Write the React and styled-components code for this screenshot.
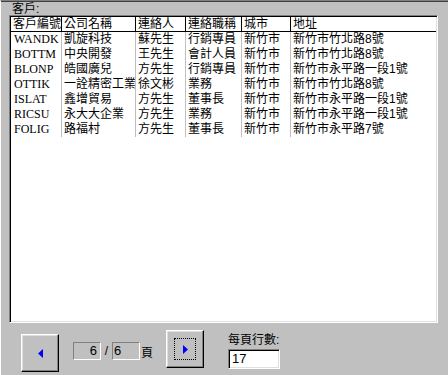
import React from "react";
import styled, { createGlobalStyle } from "styled-components";

const customers = [
  ["WANDK", "凱旋科技", "蘇先生", "行銷專員", "新竹市", "新竹市竹北路8號"],
  ["BOTTM", "中央開發", "王先生", "會計人員", "新竹市", "新竹市竹北路8號"],
  ["BLONP", "皓國廣兒", "方先生", "行銷專員", "新竹市", "新竹市永平路一段1號"],
  ["OTTIK", "一詮精密工業", "徐文彬", "業務", "新竹市", "新竹市竹北路8號"],
  ["ISLAT", "鑫增貿易", "方先生", "董事長", "新竹市", "新竹市永平路一段1號"],
  ["RICSU", "永大大企業", "方先生", "業務", "新竹市", "新竹市永平路一段1號"],
  ["FOLIG", "路福村", "方先生", "董事長", "新竹市", "新竹市永平路7號"],
];

const headers = ["客戶編號", "公司名稱", "連絡人", "連絡職稱", "城市", "地址"];

function Arrow({ dir }) {
  return (
    <svg width="5" height="9" viewBox="0 0 5 9">
      {dir === "left" ? (
        <polygon points="5,0 5,9 0,4.5" fill="#0000ff" />
      ) : (
        <polygon points="0,0 0,9 5,4.5" fill="#0000ff" />
      )}
    </svg>
  );
}

export default function App() {
  return (
    <>
      <GlobalStyle />
      <Frame>
        <Label>客戶:</Label>
        <Grid>
          <Table>
            {headers.map((h, i) => (
              <HeadCell key={h} $first={i === 0}>
                {h}
              </HeadCell>
            ))}
            {customers.map((row) =>
              row.map((v, i) => (
                <Cell key={row[0] + i} $first={i === 0} $code={i === 0}>
                  {v}
                </Cell>
              ))
            )}
          </Table>
        </Grid>
        <Footer>
          <Button $top={11}>
            <Arrow dir="left" />
          </Button>
          <Pager>
            <PageBox $align="right">6</PageBox>
            <Slash>/</Slash>
            <PageBox $align="left">6</PageBox>
            <PageText>頁</PageText>
          </Pager>
          <Button $top={7}>
            <Focus>
              <Arrow dir="right" />
            </Focus>
          </Button>
          <RowsField>
            <FieldLabel>每頁行數:</FieldLabel>
            <Input>17</Input>
          </RowsField>
        </Footer>
      </Frame>
    </>
  );
}

//styles

const GlobalStyle = createGlobalStyle`
  body {
    margin: 0;
    font-family: "Liberation Sans", "Noto Sans CJK TC", sans-serif;
    font-size: 12px;
    color: #000;
  }
`;

const Frame = styled.div`
  width: 448px;
  height: 375px;
  box-sizing: border-box;
  background: #c0c0c0;
  border-top: 1px solid #808080;
  border-left: 1px solid #ffffff;
  box-shadow: inset 0 1px 0 #404040;
  display: flex;
  flex-direction: column;
`;

const Label = styled.div`
  height: 14px;
  line-height: 14px;
  padding-left: 11px;
  padding-top: 1px;
  box-sizing: border-box;
`;

const Grid = styled.div`
  margin-left: 8px;
  width: 429px;
  height: 308px;
  box-sizing: border-box;
  background: #fff;
  border-top: 1px solid #808080;
  border-left: 1px solid #808080;
  border-right: 1px solid #ffffff;
  border-bottom: 1px solid #ffffff;
  box-shadow: inset 1px 1px 0 #000, inset -1px -1px 0 #dfdfdf;
  padding: 1px;
  overflow: hidden;
`;

const Table = styled.div`
  display: grid;
  grid-template-columns: 50px 74px 50px 56px 49px 1fr;
  grid-auto-rows: 15px;
`;

const HeadCell = styled.div`
  border-left: ${(p) => (p.$first ? "none" : "1px solid #000")};
  border-bottom: 1px solid #000;
  padding-left: 2px;
  line-height: 14px;
  white-space: nowrap;
  overflow: hidden;
`;

const Cell = styled.div`
  border-left: ${(p) => (p.$first ? "none" : "1px solid #c0c0c0")};
  padding-left: ${(p) => (p.$code ? "3px" : "2px")};
  line-height: 15px;
  white-space: nowrap;
  overflow: hidden;
  font-family: ${(p) =>
    p.$code
      ? `"Liberation Serif", serif`
      : `"Liberation Sans", "Noto Sans CJK TC", sans-serif`};
  font-size: 12px;
`;

const Footer = styled.div`
  display: flex;
  align-items: flex-start;
  padding-left: 20px;
`;

const Button = styled.div`
  margin-top: ${(p) => p.$top}px;
  width: 38px;
  height: 38px;
  box-sizing: border-box;
  background: #c0c0c0;
  border-top: 1px solid #fff;
  border-left: 1px solid #fff;
  border-right: 1px solid #000;
  border-bottom: 1px solid #000;
  box-shadow: inset -1px -1px 0 #808080, inset 1px 1px 0 #dfdfdf;
  display: flex;
  align-items: center;
  justify-content: center;
`;

const Focus = styled.div`
  width: 22px;
  height: 22px;
  box-sizing: border-box;
  border: 1px dotted #000;
  display: flex;
  align-items: center;
  justify-content: center;
`;

const Pager = styled.div`
  margin-top: 19px;
  margin-left: 14px;
  margin-right: 13px;
  display: flex;
  align-items: center;
`;

const PageBox = styled.div`
  width: 28px;
  height: 18px;
  box-sizing: border-box;
  border-top: 1px solid #808080;
  border-left: 1px solid #808080;
  border-right: 1px solid #fff;
  border-bottom: 1px solid #fff;
  text-align: ${(p) => p.$align};
  padding: 0 3px 0 1px;
  line-height: 16px;
  font-size: 13px;
`;

const Slash = styled.span`
  width: 11px;
  text-align: center;
  font-size: 12px;
`;

const PageText = styled.span`
  margin-left: 1px;
  font-size: 12px;
`;

const RowsField = styled.div`
  margin-top: 9px;
  margin-left: 24px;
  display: flex;
  flex-direction: column;
`;

const FieldLabel = styled.div`
  line-height: 16px;
  height: 17px;
`;

const Input = styled.div`
  width: 52px;
  height: 20px;
  box-sizing: border-box;
  background: #fff;
  border-top: 1px solid #808080;
  border-left: 1px solid #808080;
  border-right: 1px solid #fff;
  border-bottom: 1px solid #fff;
  box-shadow: inset 1px 1px 0 #000, inset -1px -1px 0 #dfdfdf;
  padding-left: 3px;
  line-height: 18px;
  font-size: 13px;
`;
